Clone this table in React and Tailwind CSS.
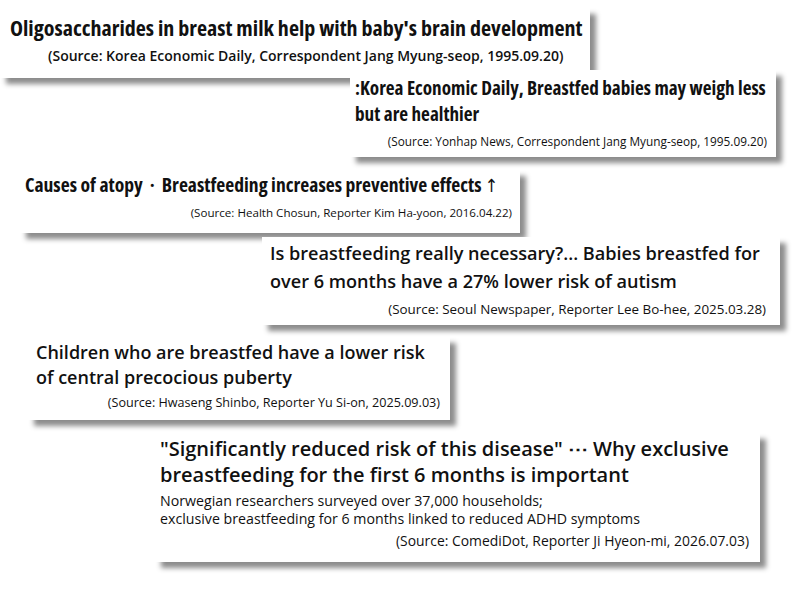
const os = "font-['Open_Sans','Noto_Sans',sans-serif]";

const Card = ({ className, children }) => (
  <div className={`bg-white shadow-[6px_6px_5px_rgba(0,0,0,0.45)] ${className}`}>{children}</div>
);

const App = () => {
  return (
    <div className={`w-[800px] h-[600px] overflow-hidden bg-white text-[#111] flex flex-col items-start ${os}`}>
      <Card className="mt-[8px] ml-0 w-[590px] h-[70px] pl-[10px] pt-[5px]">
        <h1 className="font-bold font-stretch-condensed text-[22px] leading-[28px] whitespace-nowrap">
          Oligosaccharides in breast milk help with baby's brain development
        </h1>
        <p className="font-semibold text-[14px] leading-[20px] pl-[38px] mt-[5px] whitespace-nowrap">
          (Source: Korea Economic Daily, Correspondent Jang Myung-seop, 1995.09.20)
        </p>
      </Card>

      <Card className="-mt-[8px] ml-[350px] w-[426px] h-[87px] pl-[5px] pr-[2px] pt-[5px]">
        <h2 className="font-bold font-stretch-condensed text-[19.2px] leading-[26px]">
          :Korea Economic Daily, Breastfed babies may weigh less but are healthier
        </h2>
        <p className="font-normal text-[11.8px] leading-[18px] text-right pr-[7px] mt-[5px] whitespace-nowrap">
          (Source: Yonhap News, Correspondent Jang Myung-seop, 1995.09.20)
        </p>
      </Card>

      <Card className="mt-[13px] ml-[20px] w-[500px] h-[63px] pl-[5px] pr-[8px] pt-[1px]">
        <h2 className="font-bold font-stretch-condensed text-[19.6px] leading-[28px] whitespace-nowrap">
          Causes of atopy &nbsp;·&nbsp; Breastfeeding increases preventive effects
          <span className="font-['DejaVu_Sans',sans-serif] font-normal text-[18px] ml-[3px]">↑</span>
        </h2>
        <p className="font-normal text-[11.6px] leading-[18px] text-right mt-[4px] whitespace-nowrap">
          (Source: Health Chosun, Reporter Kim Ha-yoon, 2016.04.22)
        </p>
      </Card>

      <Card className="mt-[4px] ml-[262px] w-[518px] h-[88px] pl-[8px] pr-[14px] pt-[2px]">
        <h2 className="font-semibold text-[18.1px] leading-[28px]">
          Is breastfeeding really necessary?... Babies breastfed for over 6 months have a 27% lower risk of autism
        </h2>
        <p className="font-medium text-[13.4px] leading-[18px] text-right mt-[5px] whitespace-nowrap">
          (Source: Seoul Newspaper, Reporter Lee Bo-hee, 2025.03.28)
        </p>
      </Card>

      <Card className="mt-[12px] ml-[28px] w-[422px] h-[83px] pl-[8px] pr-[10px] pt-[3px]">
        <h2 className="font-semibold text-[18px] leading-[25px]">
          Children who are breastfed have a lower risk of central precocious puberty
        </h2>
        <p className="font-normal text-[12.6px] leading-[18px] text-right mt-[4px] whitespace-nowrap">
          (Source: Hwaseng Shinbo, Reporter Yu Si-on, 2025.09.03)
        </p>
      </Card>

      <Card className="mt-[13px] ml-[155px] w-[605px] h-[129px] pl-[5px] pr-[11px] pt-[3px]">
        <h2 className="font-semibold text-[20px] leading-[26px]">
          "Significantly reduced risk of this disease" ⋯ Why exclusive breastfeeding for the first 6 months is important
        </h2>
        <p className="font-normal text-[14.2px] leading-[18px] mt-[4px] whitespace-nowrap">
          Norwegian researchers surveyed over 37,000 households;
          <br />
          exclusive breastfeeding for 6 months linked to reduced ADHD symptoms
        </p>
        <p className="font-normal text-[13.9px] leading-[18px] text-right mt-[4px] whitespace-nowrap">
          (Source: ComediDot, Reporter Ji Hyeon-mi, 2026.07.03)
        </p>
      </Card>
    </div>
  );
};

export default App;
